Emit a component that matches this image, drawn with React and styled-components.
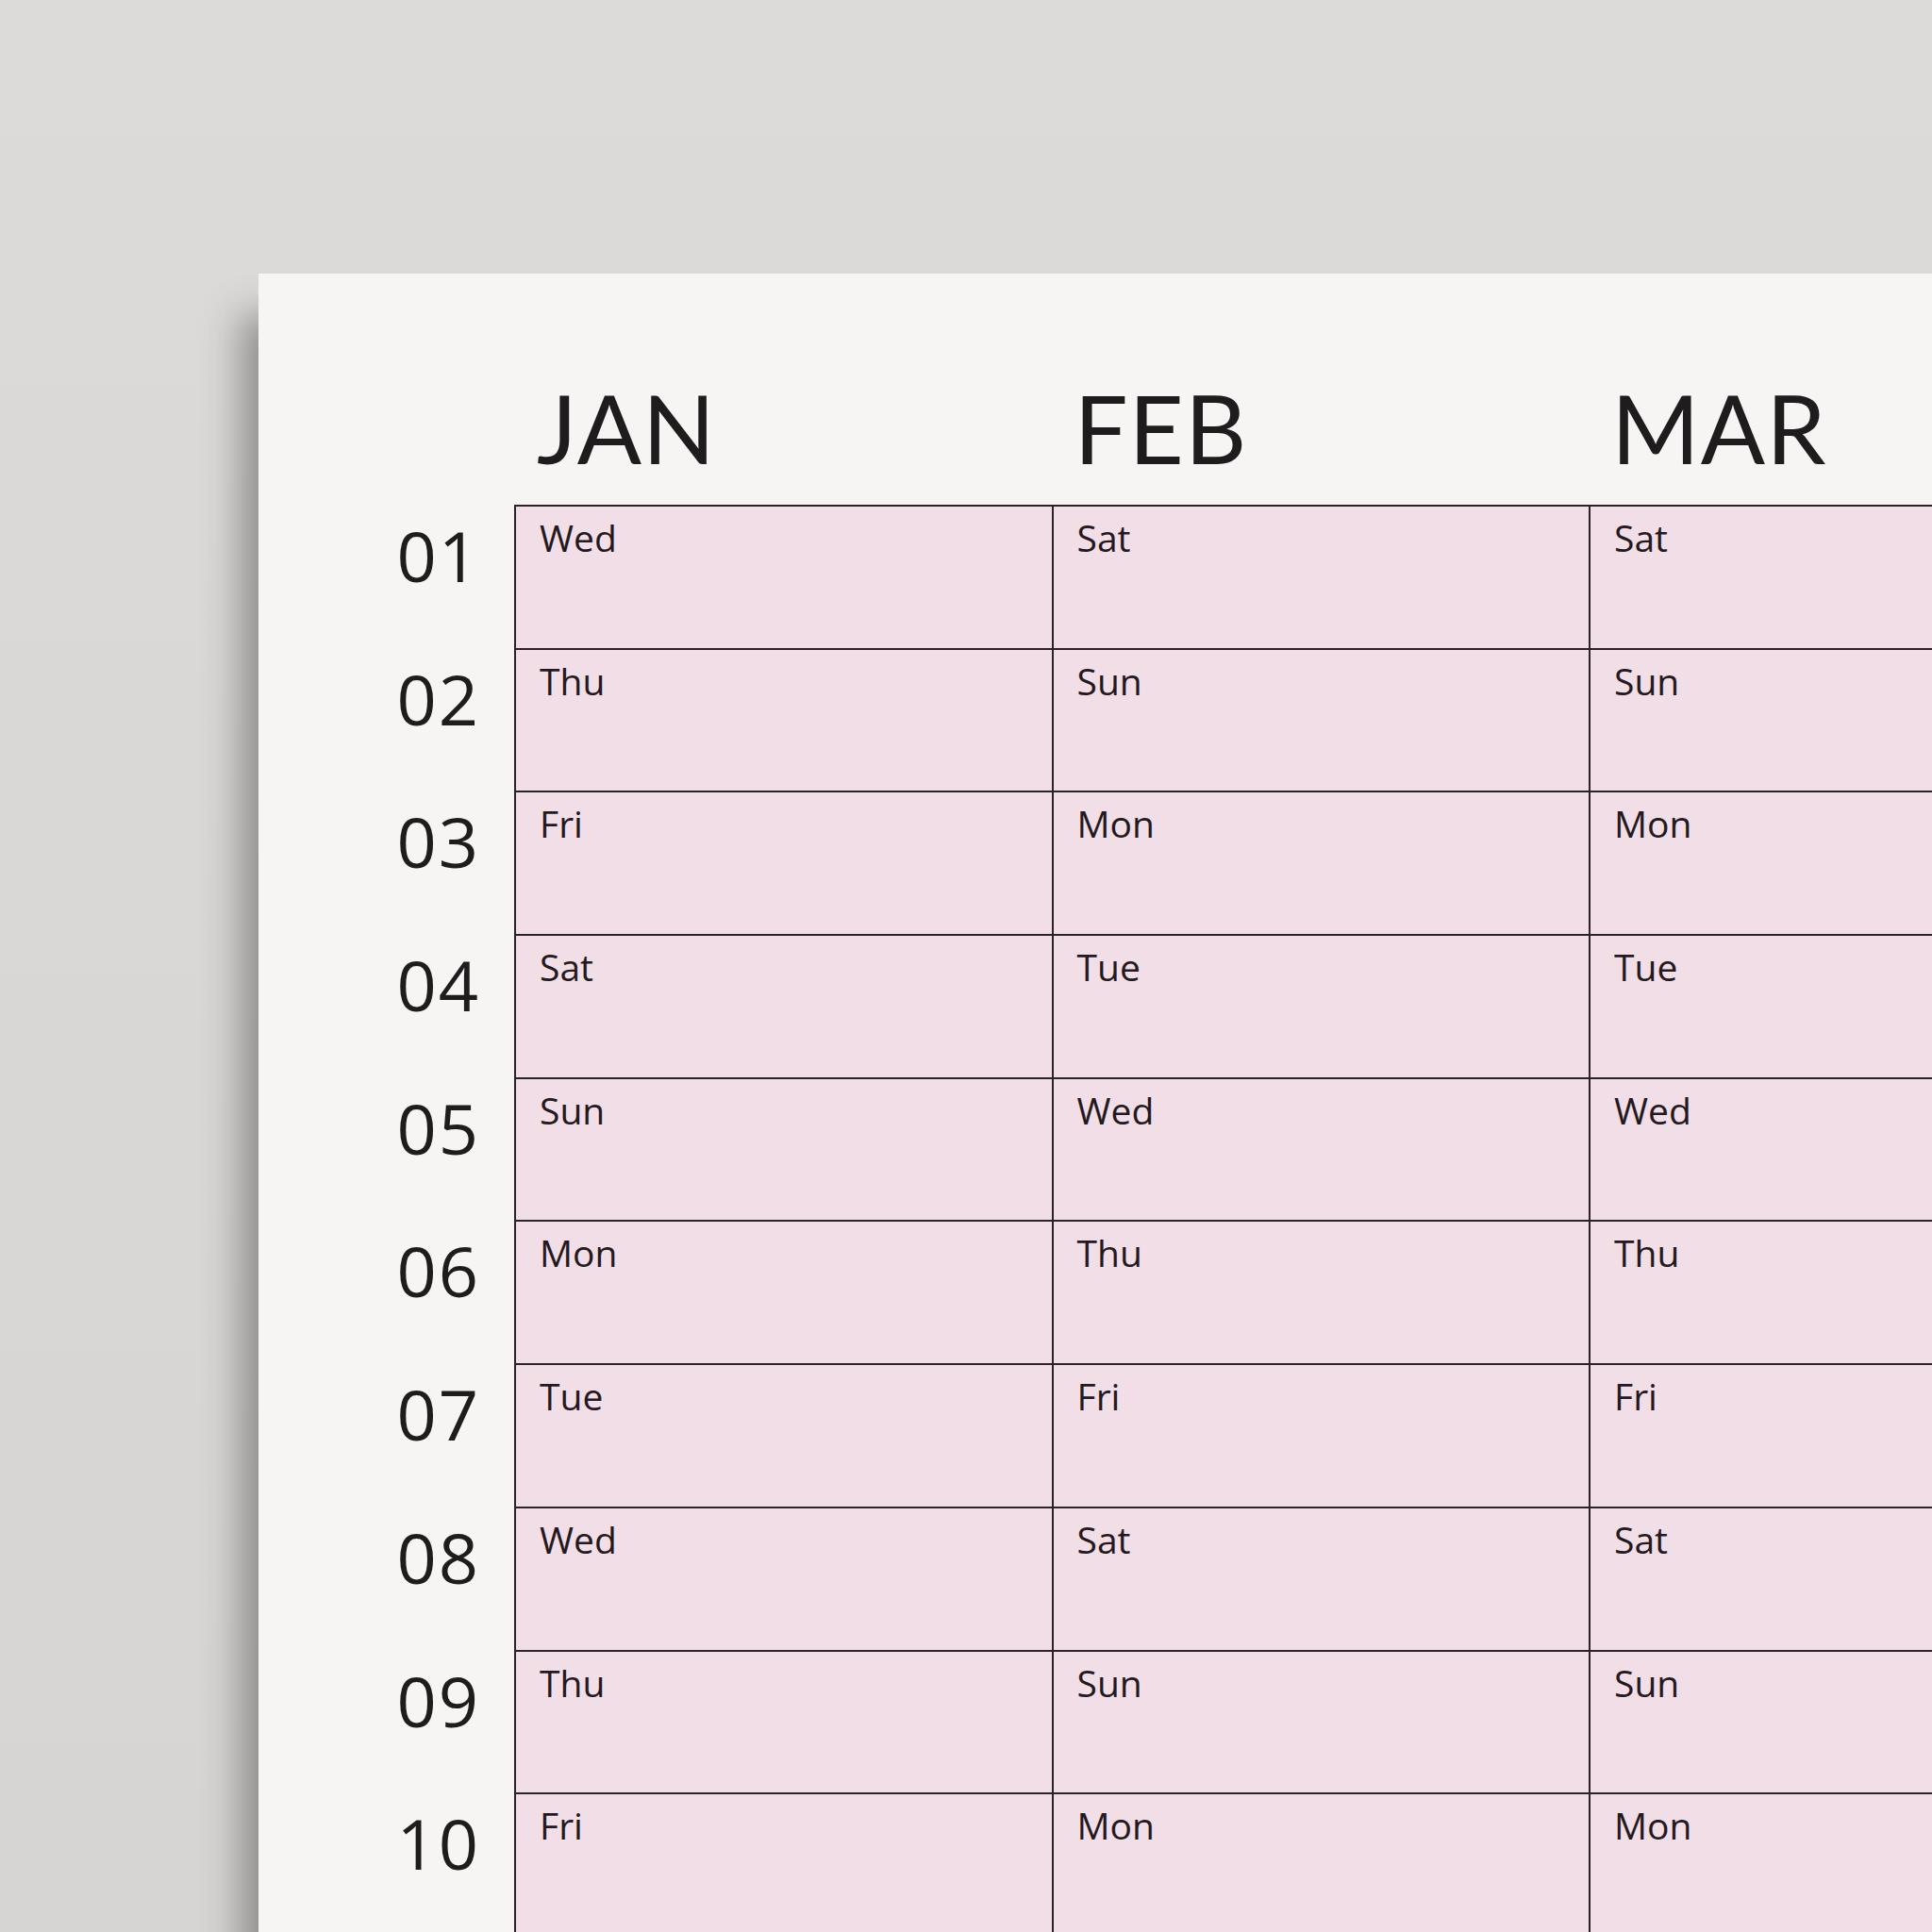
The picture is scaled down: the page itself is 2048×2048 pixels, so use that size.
import React from 'react';
import styled, { createGlobalStyle } from 'styled-components';

const GlobalStyle = createGlobalStyle`
  html, body {
    margin: 0;
    padding: 0;
  }
  body {
    width: 2048px;
    height: 2048px;
    overflow: hidden;
  }
`;

const Wall = styled.div`
  width: 2048px;
  height: 2048px;
  box-sizing: border-box;
  padding: 290px 0 0 274px;
  overflow: hidden;
  background: linear-gradient(180deg, #dcdbd9 0%, #d9d8d6 40%, #d6d5d4 100%);
`;

const Paper = styled.div`
  width: 2400px;
  height: 2200px;
  background: #f6f5f3;
  box-shadow: -22px 40px 38px -4px rgba(40, 36, 36, 0.42);
`;

const HeaderRow = styled.div`
  display: flex;
  height: 245px;
  padding-left: 271px;
`;

const MonthLabel = styled.div`
  width: 569.5px;
  flex: none;
  box-sizing: border-box;
  padding: 113px 0 0 24px;
  font-family: 'Lato', 'Open Sans', sans-serif;
  font-size: 101px;
  line-height: 1;
  letter-spacing: 1px;
  color: #1e1c1c;
`;

const Row = styled.div`
  display: flex;
  height: 151.7px;
`;

const DayNumber = styled.div`
  width: 271px;
  flex: none;
  box-sizing: border-box;
  padding: 17px 36px 0 0;
  text-align: right;
  font-family: 'Open Sans', sans-serif;
  font-size: 74px;
  line-height: 1;
  letter-spacing: 2px;
  color: #1e1c1c;
`;

const Cell = styled.div`
  width: 569.5px;
  flex: none;
  box-sizing: border-box;
  background: #f2dee6;
  border-left: 2px solid #2b2427;
  border-top: 2px solid #2b2427;
  padding: 10px 0 0 25px;
  font-family: 'Open Sans', sans-serif;
  font-size: 39px;
  line-height: 1.2;
  color: #23191e;
`;

const MONTHS = ['JAN', 'FEB', 'MAR'];
const WEEKDAYS = ['Sun', 'Mon', 'Tue', 'Wed', 'Thu', 'Fri', 'Sat'];
const YEAR = 2025;

const pad = (n) => String(n).padStart(2, '0');

export default function App() {
  const days = Array.from({ length: 10 }, (_, i) => i + 1);

  return (
    <>
      <GlobalStyle />
      <Wall>
        <Paper>
          <HeaderRow>
            {MONTHS.map((m) => (
              <MonthLabel key={m}>{m}</MonthLabel>
            ))}
          </HeaderRow>
          {days.map((d) => (
            <Row key={d}>
              <DayNumber>{pad(d)}</DayNumber>
              {MONTHS.map((m, mi) => (
                <Cell key={m}>{WEEKDAYS[new Date(YEAR, mi, d).getDay()]}</Cell>
              ))}
            </Row>
          ))}
        </Paper>
      </Wall>
    </>
  );
}
